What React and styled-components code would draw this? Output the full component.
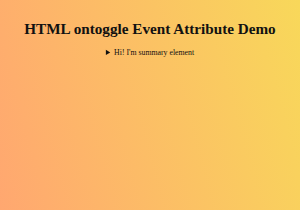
import React from 'react';
import styled, { createGlobalStyle } from 'styled-components';

const GlobalStyle = createGlobalStyle`
  html, body {
    margin: 0;
    padding: 0;
    height: 100%;
  }
  body {
    font-family: "Liberation Serif", "Times New Roman", serif;
    background: linear-gradient(75deg, #ffa770, #f8d85a);
    min-height: 210px;
  }
`;

const Page = styled.main`
  display: flex;
  flex-direction: column;
  align-items: center;
  padding-top: 20px;
  color: #111;
`;

const Title = styled.h1`
  margin: 0;
  font-size: 15.2px;
  font-weight: bold;
`;

const Details = styled.details`
  margin-top: 10px;
  font-size: 7.8px;
`;

const Summary = styled.summary`
  cursor: pointer;
`;

const App = () => (
  <>
    <GlobalStyle />
    <Page>
      <Title>HTML ontoggle Event Attribute Demo</Title>
      <Details onToggle={() => {}}>
        <Summary>Hi! I'm summary element</Summary>
        <p>This is the hidden content.</p>
      </Details>
    </Page>
  </>
);

export default App;
